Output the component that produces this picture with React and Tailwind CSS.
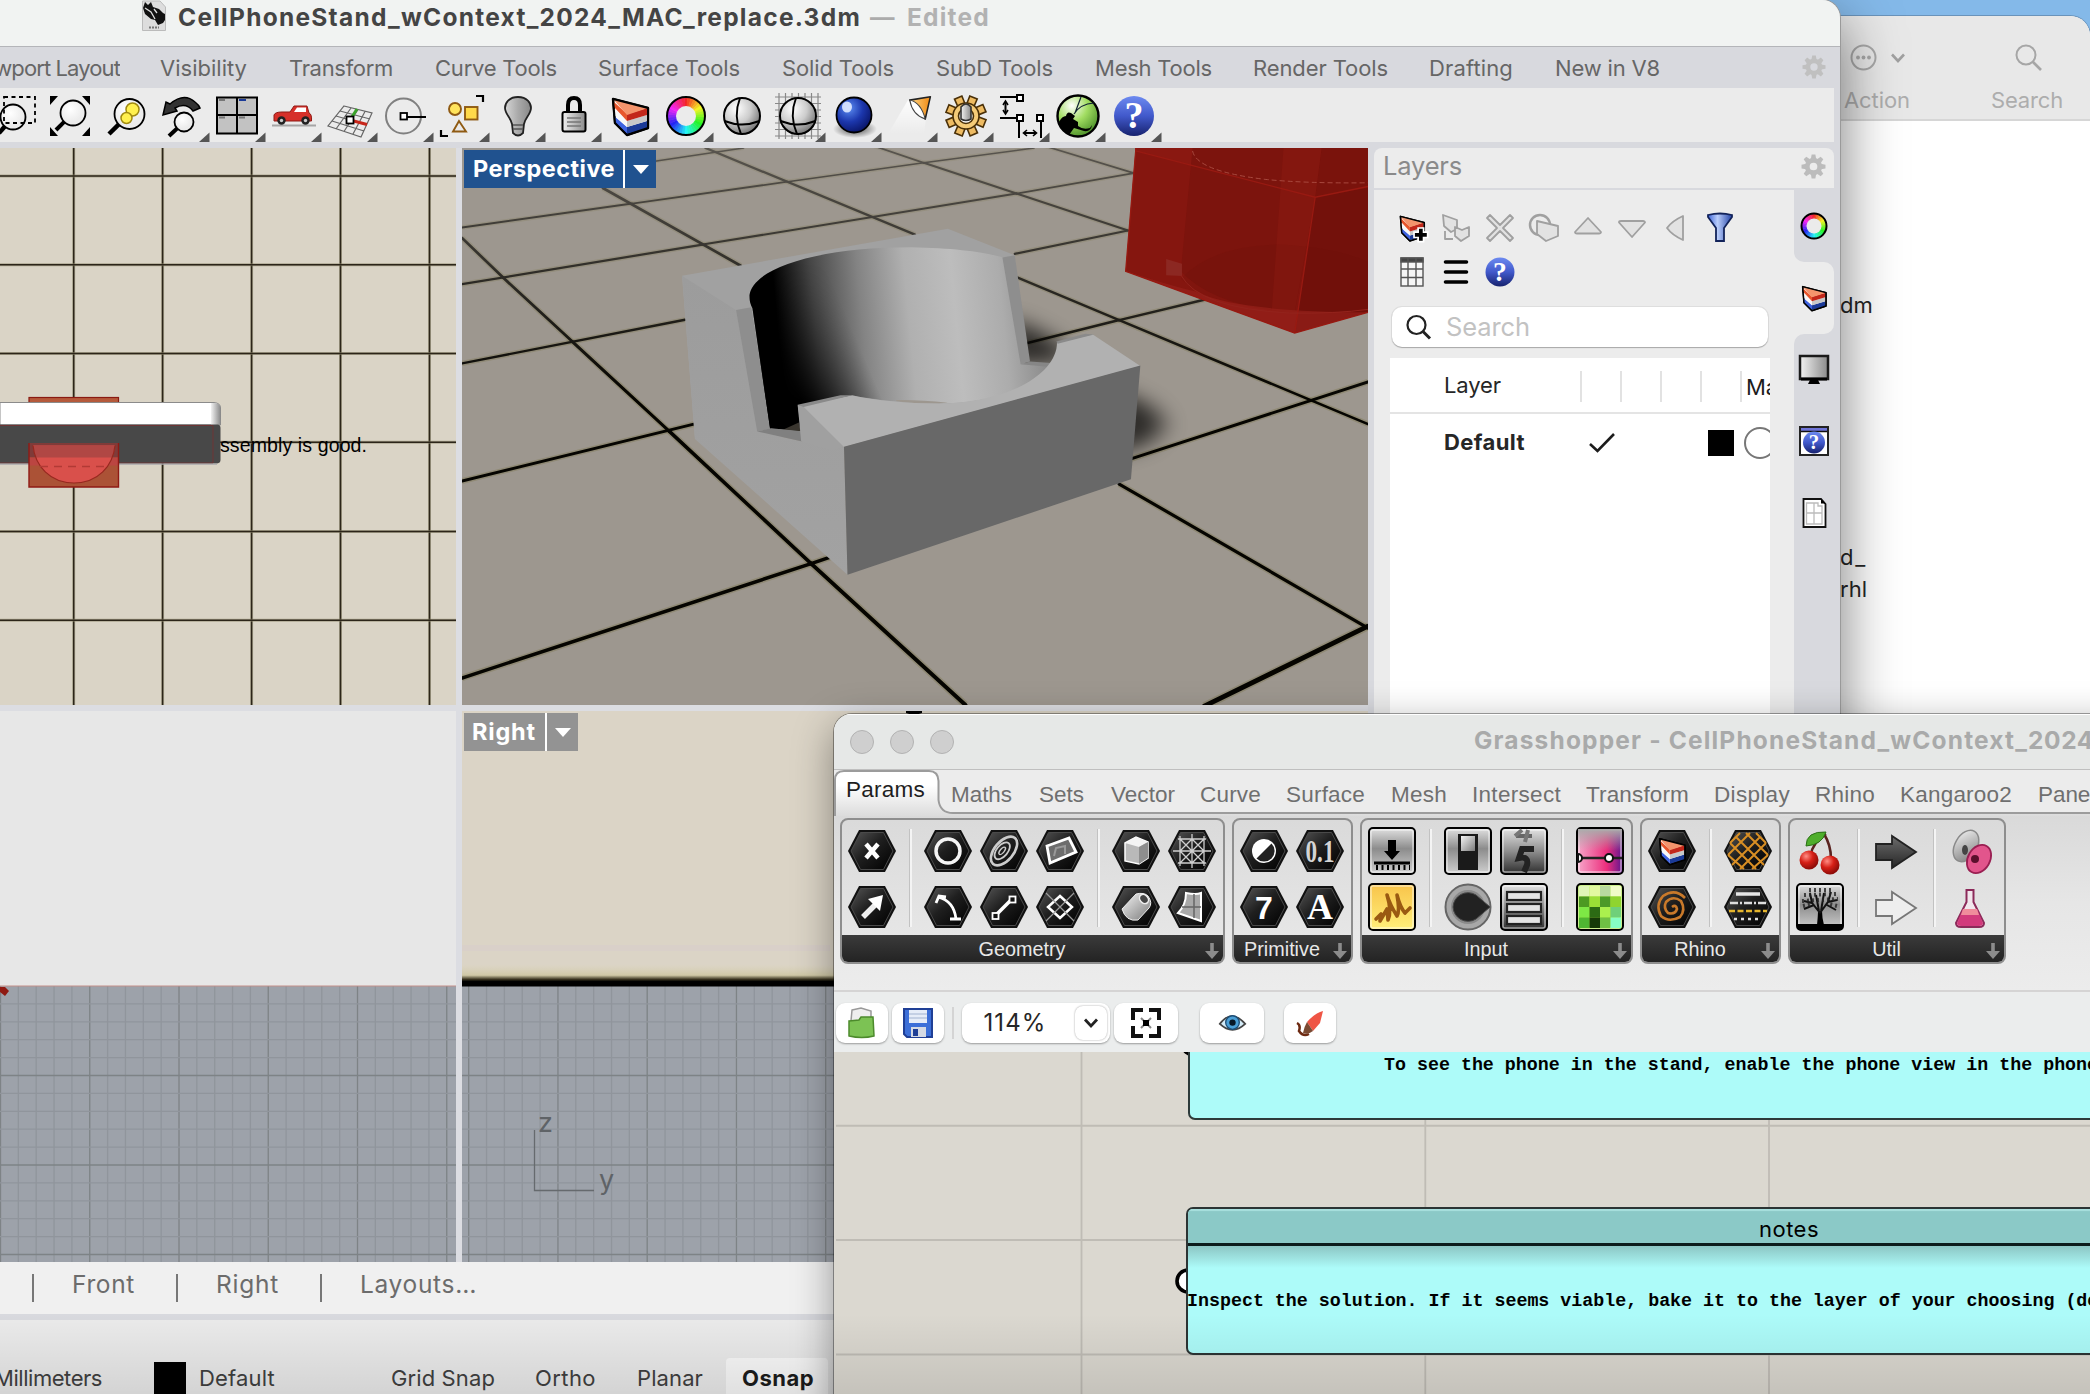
import { useLayoutEffect, useRef } from "react";

/* A one-line label whose tracking is adjusted so that it spans exactly w pixels. */
function Fit({ w, className = "", children }) {
  const ref = useRef(null);
  useLayoutEffect(() => {
    const el = ref.current;
    el.style.letterSpacing = "0px";
    const natural = el.getBoundingClientRect().width;
    const n = el.textContent.length;
    el.style.letterSpacing = `${(w - natural) / Math.max(1, n)}px`;
  }, [w]);
  return (
    <span className={`inline-block shrink-0 whitespace-pre ${className}`} style={{ width: w }}>
      <span ref={ref} className="inline-block">{children}</span>
    </span>
  );
}

/* ---------- shared drawings ---------- */

function Lens({ x, y, r, hx, hy, w = 4, fill = "url(#lens)" }) {
  const d = Math.hypot(hx - x, hy - y);
  const sx = x + ((hx - x) / d) * r;
  const sy = y + ((hy - y) / d) * r;
  return (
    <g>
      <line x1={sx} y1={sy} x2={hx} y2={hy} stroke="#000" strokeWidth={w} />
      <circle cx={x} cy={y} r={r} fill={fill} stroke="#000" strokeWidth="1.8" />
    </g>
  );
}

function Cake() {
  return (
    <g strokeLinejoin="round">
      <path d="M-17 -17 L-15 7 L-3 19 L18 12 L18 -8Z" fill="#fff" stroke="#000" strokeWidth="2.4" />
      <path d="M-3 11 L17 5 V12 L-3 18Z" fill="#1b3a97" />
      <path d="M-16 0 L-3 11 V18 L-15 7Z" fill="#3f63e0" />
      <path d="M-3 5 L17 -1 V5 L-3 11Z" fill="#c8c8c8" />
      <path d="M-16.500 -8 L-3 5 V11 L-16 -1Z" fill="#f8f8f8" />
      <path d="M-3 -2 L17 -8 V-1 L-3 5Z" fill="#c2271a" />
      <path d="M-17 -15 L-3 -2 V5 L-16 -9Z" fill="#e8562c" />
      <path d="M-17 -17 L18 -8 L-3 -1Z" fill="#f4946c" />
      <path d="M-17 -17 L-15 7 L-3 19 L18 12 L18 -8Z" fill="none" stroke="#000" strokeWidth="2" />
    </g>
  );
}

function Wheel({ outer, inner }) {
  const n = 36;
  return (
    <g>
      {Array.from({ length: n }, (_, i) => {
        const a = ((i - 0.6) / n) * Math.PI * 2;
        const b = ((i + 0.6) / n) * Math.PI * 2;
        return (
          <path
            key={i}
            d={`M0 0 L${Math.sin(a) * outer} ${-Math.cos(a) * outer} L${Math.sin(b) * outer} ${-Math.cos(b) * outer}Z`}
            fill={`hsl(${(i / n) * 360} 90% 55%)`}
          />
        );
      })}
      <circle r={inner} fill="#ebebeb" />
      <circle r={outer} fill="none" stroke="#000" strokeWidth="2" />
    </g>
  );
}

function Help({ r = 20 }) {
  return (
    <g>
      <circle r={r} fill="url(#help)" />
      <text y={r * 0.62} textAnchor="middle" fontFamily="Liberation Serif, serif" fontWeight="700" fontSize={r * 1.9} fill="#fff">?</text>
    </g>
  );
}

function Gear({ size, color }) {
  return (
    <svg width={size} height={size} viewBox="-12 -12 24 24" className="shrink-0">
      {[0, 45, 90, 135, 180, 225, 270, 315].map((a) => (
        <path key={a} d="M-2.600 -7 L-1.800 -11.500 H1.800 L2.600 -7Z" fill={color} transform={`rotate(${a})`} />
      ))}
      <circle r="6" fill="none" stroke={color} strokeWidth="4.600" />
    </svg>
  );
}

function Ball() {
  return (
    <g>
      <circle r="18" fill="url(#sphere)" stroke="#000" strokeWidth="2" />
      <path d="M-2 -18 Q-9 0 -1 18 M-17.500 5 Q0 12 17.500 5" fill="none" stroke="#000" strokeWidth="1.900" />
    </g>
  );
}

const tools = [
  { icon: <g><Lens x={-1} y={1} r={12.5} hx={-15} hy={17} w={4.5} /><rect x="-10" y="-19" width="31" height="26" fill="none" stroke="#000" strokeWidth="1.800" strokeDasharray="4 3.500" /></g> },
  { icon: <g><path d="M-20 -20H-12L-20 -11Z M20 -20H12L20 -11Z M-20 20H-12L-20 11Z M20 20H12L20 11Z" /><Lens x={3} y={-3} r={12.5} hx={-14} hy={14} w={4} /></g> },
  { icon: <g><Lens x={3.5} y={-2} r={15} hx={-17} hy={18} w={4.5} /><circle cx="6.500" cy="-6.500" r="6.500" fill="#fff04e" stroke="#a08a10" strokeWidth="1.500" /><circle cx="0.500" cy="2" r="5.500" fill="#fff04e" stroke="#a08a10" strokeWidth="1.500" /></g> },
  { tri: true, icon: <g><Lens x={2} y={6} r={9.5} hx={-13} hy={20} w={4} /><path d="M-19 -1 L-16 -14 L-12 -12 Q2 -24 13 -14 Q17 -11 18 -8 L11 -5 Q4 -14 -7 -8 L-5 -5Z" fill="#333" stroke="#000" strokeWidth="1.500" /></g> },
  { tri: true, icon: <g><rect x="-21" y="-18.500" width="40" height="36" fill="#c2c2c2" stroke="#000" strokeWidth="2" /><path d="M-1 -18V18 M-21 -1H19" stroke="#000" strokeWidth="2" /><path d="M-19 -16h6 M-19 1.500h6 M1 1.500h6" stroke="#777" strokeWidth="2" /><path d="M1 -16h7" stroke="#1b3a97" strokeWidth="2" /></g> },
  { tri: true, icon: <g><path d="M-22 9.500H22" stroke="#a5a5a5" strokeWidth="2" /><path d="M-20 5 V-1 Q-19 -4 -12 -4 H-4 L0 -10 H13 L15 -3 Q18 -2 17.500 5Z" fill="#d6302a" stroke="#8f1a15" strokeWidth="1" /><path d="M0 -4 L3 -8.500 H12 V-4Z" fill="#fff" /><circle cx="-12.500" cy="4.500" r="4.200" fill="#222" /><circle cx="11.500" cy="4.500" r="4.200" fill="#222" /><circle cx="-12.500" cy="4.500" r="1.700" fill="#ccc" /><circle cx="11.500" cy="4.500" r="1.700" fill="#ccc" /></g> },
  { tri: true, icon: <g fill="none"><path d="M-6 -10 L22 -3 L11 21 L-22 10Z M-10 -5 L20 3 M-14 0 L17 9 M-18 5 L14 15 M1 -8 L-14 13 M8 -6.500 L-6 15.500 M15 -4.500 L3 18" stroke="#666" strokeWidth="1.200" /><path d="M0 4 L7 -7" stroke="#3aa32a" strokeWidth="3" /><path d="M0 4 L17 8.500" stroke="#c8271b" strokeWidth="3" /><rect x="-3.500" y="0.500" width="7" height="7" fill="#fff" stroke="#000" strokeWidth="1.800" /></g> },
  { tri: true, icon: <g fill="none"><circle cx="-2.500" r="17.500" stroke="#808080" strokeWidth="2" /><path d="M1 1H20" stroke="#000" strokeWidth="2" /><rect x="-5.500" y="-3" width="6.500" height="6.500" fill="#fff" stroke="#000" strokeWidth="1.800" /></g> },
  { tri: true, icon: <g><circle cx="-7" cy="-7" r="6" fill="#ffe45c" stroke="#8f5a12" strokeWidth="1.900" /><rect x="3" y="-9" width="12.500" height="12.500" fill="#ffd94a" stroke="#8f5a12" strokeWidth="1.900" /><path d="M-3 5 L-9 15.500 H4Z" fill="none" stroke="#8f5a12" strokeWidth="1.900" /><path d="M14 -20H21V-14 M-21 14V20H-14" fill="none" stroke="#000" strokeWidth="2.200" /></g> },
  { tri: true, icon: <g><path d="M0 -19 C9 -19 13 -13 13 -8 C13 -2 7 2 6 8 L5 17 Q0 22 -5 17 L-6 8 C-7 2 -13 -2 -13 -8 C-13 -13 -9 -19 0 -19Z" fill="url(#bulb)" stroke="#222" strokeWidth="1.800" /><path d="M-5 9H5 M-5 13H5" stroke="#555" strokeWidth="1.500" /></g> },
  { tri: true, icon: <g><path d="M-6 -3V-11Q-6 -18 0 -18Q6 -18 6 -11V-3" fill="none" stroke="#000" strokeWidth="4" /><rect x="-11.500" y="-4" width="23" height="19.500" rx="2" fill="url(#metal)" stroke="#000" strokeWidth="2" /><path d="M-7 2H7 M-7 6H7 M-7 10H7" stroke="#777" strokeWidth="1.600" /></g> },
  { tri: true, icon: <Cake /> },
  { tri: true, icon: <Wheel outer={19} inner={10} /> },
  { icon: <Ball /> },
  { tri: true, icon: <g><path d="M-19 -23V23 M-12.500 -23V23 M-6 -23V23 M0.500 -23V23 M7 -23V23 M13.500 -23V23 M20 -23V23 M-23 -19H23 M-23 -12.500H23 M-23 -6H23 M-23 0.500H23 M-23 7H23 M-23 13.500H23 M-23 20H23" stroke="#888" strokeWidth="1.200" /><Ball /></g> },
  { tri: true, icon: <g><ellipse cx="1" cy="13" rx="22" ry="9" fill="url(#drop)" /><circle cy="-1" r="17.500" fill="url(#blue)" stroke="#000" strokeWidth="1.800" /><ellipse cx="-7" cy="-9" rx="5" ry="5.500" fill="#dfe9ff" opacity=".9" /></g> },
  { tri: true, icon: <g><path d="M-2 -16 L-22 18 H14 L16 2Z" fill="url(#beam)" /><g transform="translate(7.500 -9) scale(.86) translate(-6 9)"><path d="M-3 -17 L21 -21 L15 5Z" fill="url(#orange)" stroke="#222" strokeWidth="1.800" strokeLinejoin="round" /><path d="M-3 -17 Q10 -14 15 5 Q0 0 -3 -17Z" fill="#fff" stroke="#444" strokeWidth="1.200" /></g></g> },
  { tri: true, icon: <g stroke="#4a3008" strokeWidth="1.600">{[0, 45, 90, 135, 180, 225, 270, 315].map((a) => (<path key={a} d="M-3.800 -10 L-4 -20 H4 L3.800 -10Z" fill="#eebb62" transform={`rotate(${a + 22})`} />))}<circle r="13" fill="#f5cb78" /><circle r="7.500" fill="#fff" /><path d="M-5 3 V-9 Q0 -15 5 -9 V3 Q0 6 -5 3Z" fill="url(#metal)" stroke="#333" /></g> },
  { tri: true, icon: <g fill="none" stroke="#000" strokeWidth="2"><path d="M-22 -19H-5 M-22 2H-5 M-16.500 -14V-3 M-3 6V22 M19 6V22 M2 17H14" /><path d="M-19 -11L-16.500 -15L-14 -11 M-19 -6L-16.500 -2L-14 -6 M5 14L1.500 17L5 20 M11 14L14.500 17L11 20" strokeWidth="1.600" /><rect x="-5" y="-21" width="6" height="6" fill="#fff" /><rect x="-5" y="-1" width="6" height="6" fill="#fff" /><rect x="15" y="-1" width="6" height="6" fill="#fff" /></g> },
  { tri: true, icon: <g><circle r="20.500" fill="url(#green)" stroke="#000" strokeWidth="2.400" /><path d="M-19 6 Q-16 0 -12 0 Q-11 -5 -7 -3 L-3 0 L-5 3 L0 6 V10 Q5 14 12 12 L14 9 Q13 16 6 15 L-4 12 L-9 19 Q-17 15 -19 6Z" /><path d="M-4 -2 Q2 -12 16 -13 M-3 -3 L3 -19" stroke="#123" strokeWidth="1.200" fill="none" /></g> },
  { tri: true, icon: <Help r={20} /> },
];

const menu = [
  ["Visibility", 87, 42], ["Transform", 104, 42], ["Curve Tools", 122, 41], ["Surface Tools", 142, 42], ["Solid Tools", 112, 42],
  ["SubD Tools", 117, 42], ["Mesh Tools", 117, 41], ["Render Tools", 135, 41], ["Drafting", 84, 42], ["New in V8", 105, 42],
];

function Defs() {
  return (
    <svg className="absolute h-0 w-0">
      <defs>
        <radialGradient id="lens" cx=".4" cy=".35"><stop offset="0" stopColor="#fff" /><stop offset="1" stopColor="#ececec" /></radialGradient>
        <radialGradient id="sphere" cx=".35" cy=".3" r=".8"><stop offset="0" stopColor="#fff" /><stop offset=".5" stopColor="#ccc" /><stop offset="1" stopColor="#666" /></radialGradient>
        <radialGradient id="blue" cx=".35" cy=".3" r=".8"><stop offset="0" stopColor="#5c8df2" /><stop offset=".5" stopColor="#1c37ad" /><stop offset="1" stopColor="#060f5c" /></radialGradient>
        <radialGradient id="green" cx=".35" cy=".25" r=".85"><stop offset="0" stopColor="#fff" /><stop offset=".45" stopColor="#a2dd62" /><stop offset="1" stopColor="#3f8420" /></radialGradient>
        <radialGradient id="drop"><stop offset="0" stopColor="#000" stopOpacity=".7" /><stop offset="1" stopColor="#000" stopOpacity="0" /></radialGradient>
        <linearGradient id="help" x2="0" y2="1"><stop offset="0" stopColor="#6d8af0" /><stop offset=".5" stopColor="#4159cb" /><stop offset="1" stopColor="#17226e" /></linearGradient>
        <linearGradient id="bulb"><stop offset="0" stopColor="#d6d6d6" /><stop offset=".5" stopColor="#aaa" /><stop offset="1" stopColor="#888" /></linearGradient>
        <linearGradient id="metal"><stop offset="0" stopColor="#f2f2f2" /><stop offset="1" stopColor="#8a8a8a" /></linearGradient>
        <linearGradient id="orange"><stop offset="0" stopColor="#ffd98a" /><stop offset="1" stopColor="#f08a14" /></linearGradient>
        <linearGradient id="beam" x2="0" y2="1"><stop offset="0" stopColor="#fff" stopOpacity=".9" /><stop offset="1" stopColor="#fff" stopOpacity="0" /></linearGradient>
        <linearGradient id="hex" x2="1" y2="1"><stop offset="0" stopColor="#555" /><stop offset=".45" stopColor="#1f1f1f" /><stop offset="1" stopColor="#000" /></linearGradient>
        <linearGradient id="steel" x2="0" y2="1"><stop offset="0" stopColor="#e2e2e2" /><stop offset=".45" stopColor="#8c8c8c" /><stop offset="1" stopColor="#d0d0d0" /></linearGradient>
        <linearGradient id="steelDark" x2="0" y2="1"><stop offset="0" stopColor="#e6e6e6" /><stop offset=".5" stopColor="#8f8f8f" /><stop offset="1" stopColor="#2c2c2c" /></linearGradient>
        <linearGradient id="amber" x2="0" y2="1"><stop offset="0" stopColor="#f8c34a" /><stop offset="1" stopColor="#fff07a" /></linearGradient>
        <linearGradient id="pink"><stop offset="0" stopColor="#f7a9cb" /><stop offset=".65" stopColor="#ec2d7c" /><stop offset="1" stopColor="#5b1590" /></linearGradient>
        <linearGradient id="greyFade" x2="0" y2="1"><stop offset="0" stopColor="#aaa" /><stop offset="1" stopColor="#aaa" stopOpacity="0" /></linearGradient>
        <linearGradient id="funnel"><stop offset="0" stopColor="#3f66d8" /><stop offset=".4" stopColor="#b9cdfb" /><stop offset="1" stopColor="#2444a8" /></linearGradient>
        <radialGradient id="cherry" cx=".35" cy=".3" r=".7"><stop offset="0" stopColor="#ff8d84" /><stop offset=".5" stopColor="#d61f16" /><stop offset="1" stopColor="#8d0c08" /></radialGradient>
        <linearGradient id="lightMetal" x2="1" y2="1"><stop offset="0" stopColor="#f4f4f4" /><stop offset="1" stopColor="#7a7a7a" /></linearGradient>
        <linearGradient id="darkArrow" x2="0" y2="1"><stop offset="0" stopColor="#6c6c6c" /><stop offset="1" stopColor="#262626" /></linearGradient>
        <linearGradient id="tab" x2="0" y2="1"><stop offset=".3" stopColor="#fff" /><stop offset="1" stopColor="#d9d9d9" /></linearGradient>
      </defs>
    </svg>
  );
}

/* ---------- viewports ---------- */

function TopView() {
  return (
    <svg width="456" height="557" viewBox="0 148 456 557" className="block">
      <rect y="148" width="456" height="557" fill="#dad4c6" />
      {[73.7, 162.6, 251.6, 340.5, 429.5].map((x) => (
        <g key={x}><path d={`M${x} 148V705`} stroke="#8f8a6e" strokeWidth="3" opacity=".6" /><path d={`M${x} 148V705`} stroke="#2c2519" strokeWidth="1.500" /></g>
      ))}
      {[175.9, 264.7, 353.5, 442.3, 531.4, 620.2].map((y) => (
        <g key={y}><path d={`M0 ${y}H456`} stroke="#8f8a6e" strokeWidth="3" opacity=".6" /><path d={`M0 ${y}H456`} stroke="#2c2519" strokeWidth="1.500" /></g>
      ))}
      <rect x="29" y="397.500" width="89.500" height="10" fill="#b55a3b" stroke="#8a1a12" strokeWidth="1.200" />
      <path d="M0 402.500H214Q220.500 403 220.500 408V425H0Z" fill="#fff" stroke="#8b8b8b" />
      <path d="M211 403H214Q220.500 403 220.500 408V425H211Z" fill="url(#metal)" />
      <path d="M0 424.500H218Q220.500 425 220.500 428V460Q220.500 463 217 463.500H0Z" fill="#484848" />
      <path d="M0 425.500H213V463H0" fill="none" stroke="#6e3434" strokeWidth="1" />
      <path d="M0 464.200H217" stroke="#a9a9ad" strokeWidth="1.300" />
      <rect x="29" y="443" width="89.500" height="44" fill="#ab5236" />
      <rect x="29" y="443" width="89.500" height="14.500" fill="#7f3b39" />
      <rect x="29" y="457.500" width="89.500" height="8" fill="#bb4541" />
      <path d="M33 445.500H115C113 466 98 483 74 483S35 466 33 445.500Z" fill="#d9504b" />
      <path d="M33 445.500H115L112.500 457.500H35.500Z" fill="#b04744" />
      <path d="M33 445.500C35 466 50 483 74 483S113 466 115 445.500" fill="none" stroke="#96281f" strokeWidth="1.200" />
      <path d="M40 466.500H110" stroke="#b23a35" strokeWidth="1.300" strokeDasharray="8 6" />
      <path d="M29 443V487H118.500V443" fill="none" stroke="#8f1a14" strokeWidth="1.400" />
      <text x="220" y="452" fontFamily="Liberation Sans, Arial, sans-serif" fontSize="19.500" textLength="147">ssembly is good.</text>
    </svg>
  );
}

const floor = [
  [10, 265, 80, 372, 3.4], [80, 372, 198, 545, 3.6], [198, 545, 363, 787, 3.9], [363, 787, 605, 1145, 4.4], [605, 1145, 868, 1527, 5],
  [250, 130, 485, 340, 3.4], [1130, 930, 1554, 1319, 4],
  [425, 22, 782, 256, 2.9], [957, 372, 1130, 487, 3], [1130, 487, 1554, 768, 3.3],
  [700, 10, 797, 62, 2.2], [797, 62, 955, 145, 2.5], [955, 145, 1145, 245, 2.7], [1000, 15, 1155, 90, 2.1],
  [10, 237, 300, 172, 2.4], [300, 172, 565, 113, 2.2], [565, 113, 797, 62, 2], [797, 62, 985, 22, 1.9], [330, 60, 490, 22, 1.9],
  [10, 390, 420, 283, 2.8], [420, 283, 955, 145, 2.6], [955, 145, 1155, 90, 2.2],
  [10, 604, 390, 486, 3], [952, 308, 1145, 245, 2.7],
  [10, 922, 405, 768, 3.6], [960, 554, 1130, 487, 3.2], [1130, 487, 1280, 430, 3],
  [10, 1454, 605, 1145, 4.4], [605, 1145, 640, 1126, 4.4], [1150, 862, 1554, 654, 3.8],
  [1275, 1530, 1554, 1314, 6],
];

function PerspectiveView() {
  return (
    <svg width="906" height="557" viewBox="10 22 1544 1505" preserveAspectRatio="none" className="block">
      <defs>
        <linearGradient id="bore" gradientUnits="userSpaceOnUse" x1="510" y1="470" x2="1010" y2="440">
          <stop offset="0" stopColor="#000" /><stop offset=".07" stopColor="#000" /><stop offset=".2" stopColor="#454545" /><stop offset=".36" stopColor="#838383" />
          <stop offset=".52" stopColor="#b0b0b0" /><stop offset=".68" stopColor="#bdbdbd" /><stop offset=".84" stopColor="#acacac" /><stop offset="1" stopColor="#858585" />
        </linearGradient>
        <linearGradient id="boreDark" gradientUnits="userSpaceOnUse" x1="570" y1="640" x2="700" y2="605">
          <stop offset="0" stopColor="#000" /><stop offset="1" stopColor="#000" stopOpacity="0" />
        </linearGradient>
        <linearGradient id="boreMask" x2="0" y2="1"><stop offset=".1" stopColor="#000" /><stop offset=".8" stopColor="#fff" /></linearGradient>
        <mask id="lower" maskUnits="userSpaceOnUse" x="480" y="280" width="560" height="540"><rect x="480" y="280" width="560" height="540" fill="url(#boreMask)" /></mask>
        <linearGradient id="haze" gradientUnits="userSpaceOnUse" x1="0" y1="22" x2="0" y2="700"><stop offset="0" stopColor="#9d978f" stopOpacity=".55" /><stop offset="1" stopColor="#9d978f" stopOpacity="0" /></linearGradient>
        <linearGradient id="side" x2="0" y2="1"><stop offset="0" stopColor="#9c9c9c" /><stop offset="1" stopColor="#a2a2a2" /></linearGradient>
        <filter id="soft" x="-60%" y="-60%" width="220%" height="220%"><feGaussianBlur stdDeviation="20 28" /></filter>
      </defs>
      <rect x="10" y="22" width="1544" height="1505" fill="#9d978f" />
      {floor.map(([a, b, c, d, w], i) => (
        <path key={i} d={`M${a} ${b}L${c} ${d}`} stroke="#807a55" strokeWidth={w + 2.2} opacity=".45" vectorEffect="non-scaling-stroke" />
      ))}
      {floor.map(([a, b, c, d, w], i) => (
        <path key={i} d={`M${a} ${b}L${c} ${d}`} stroke="#050400" strokeWidth={w * 0.8} strokeLinecap="round" vectorEffect="non-scaling-stroke" />
      ))}
      <rect x="10" y="22" width="1544" height="700" fill="url(#haze)" />
      <path d="M1120 670 L1185 720 L1210 770 L1180 820 L1120 850Z" fill="#000" opacity=".72" filter="url(#soft)" />
      <path d="M940 480 L985 510 L1025 545 L1050 600 L940 610Z" fill="#000" opacity=".72" filter="url(#soft)" />
      {/* solid */}
      <path d="M385 367 L838 240 L952 312 L965 600 L900 700 L600 800 L407 808Z" fill="#a1a1a1" />
      <path d="M385 367 L477 460 L513 788 L590 815 L582 716 L661 828 L667 1175 L407 808Z" fill="url(#side)" />
      <path d="M477 460 L503 452 L537 780 L513 788Z" fill="#8e8e8e" />
      <path d="M500 420 C505 350 610 290 775 290 C850 292 900 303 932 318 L962 603 L1014 603 C995 660 930 705 840 712 C780 712 720 705 675 692 L655 692 L582 718 L588 786 L535 780 L505 455 C500 440 500 430 500 420Z" fill="url(#bore)" />
      <path d="M500 420 C505 350 610 290 775 290 L775 712 L675 692 L582 718 L588 786 L535 780 L505 455Z" fill="url(#boreDark)" mask="url(#lower)" />
      <path d="M556 784 L584 764 L588 787Z" fill="#3a362f" />
      <path d="M513 788 L537 779 L588 787 L590 815Z" fill="#808080" />
      <path d="M931 318 L952 312 L978 599 L962 606Z" fill="#8e8e8e" />
      <path d="M962 606 L978 599 L1014 603 L1009 613Z" fill="#868686" />
      <path d="M750 703 Q790 702 838 710 Q800 716 750 706Z" fill="#9d978f" />
      <path d="M582 716 L596 722 L661 829 L640 840 L588 815Z" fill="#a0a0a0" />
      <path d="M590 718 L675 690 C720 706 780 714 840 712 C960 700 1024 620 1024 548 L1085 526 L1166 611 L661 830Z" fill="#b1b1b1" />
      <path d="M582 716 L655 690 L675 690 L592 722Z" fill="#8a8a8a" />
      <path d="M1023 545 L1072 524 L1087 526 L1025 551Z" fill="#8a8a8a" />
      <path d="M661 829 L1166 610 L1150 917 L667 1175Z" fill="#686868" />
      {/* red block */}
      <path d="M1158 22 H1554 V466 L1429 522 L1141 355Z" fill="#8a1811" />
      <path d="M1158 30 L1464 155 L1429 522 L1141 355Z" fill="#85160f" />
      <path d="M1255 22 H1475 L1464 155 L1429 468 Q1290 450 1235 355Z" fill="#7c140d" />
      <path d="M1475 22 H1554 V466 L1429 522 L1464 155Z" fill="#73110b" />
      <path d="M1475 22 H1554 V130 L1464 155Z" fill="#7a130c" />
      <path d="M1410 22 L1390 460 L1429 468 L1464 155 L1475 22Z" fill="#84170f" />
      <path d="M1235 375 Q1290 285 1400 283 Q1500 290 1554 330 V466 Q1300 480 1235 375Z" fill="#5f0d08" opacity=".12" />
      <path d="M1141 355 Q1220 395 1260 410 Q1330 465 1554 466 L1429 522Z" fill="#99231c" opacity=".6" />
      <path d="M1210 322 L1237 335 V368 L1210 366Z" fill="#8c2822" />
      <path d="M1158 30 L1464 155 L1554 126 M1464 155 L1429 522 M1158 22 L1158 32 L1141 355 L1429 522 L1554 466" fill="none" stroke="#981a12" strokeWidth="1.300" vectorEffect="non-scaling-stroke" />
      <path d="M1255 30 Q1262 85 1380 107 Q1450 118 1554 116" fill="none" stroke="#a8483e" strokeWidth="1" strokeDasharray="5 3" vectorEffect="non-scaling-stroke" />
      <path d="M1235 365 Q1265 455 1420 468 Q1500 470 1554 458" fill="none" stroke="#93231c" strokeWidth="1" vectorEffect="non-scaling-stroke" />
    </svg>
  );
}

function CPlane({ x0, width, children }) {
  const left = x0;
  const vs = [];
  for (let i = 0, x = x0 === 0 ? 0.5 : 468.7; x < left + width; i++, x += 17.85) vs.push([x, i % 5 === 0]);
  const hs = [];
  for (let i = 1, y = 986; y < 1250; i++) { y += 17.9; hs.push([y, i % 5 === 0]); }
  return (
    <svg width={width} height="551" viewBox={`${left} 711 ${width} 551`} className="block">
      <rect x={left} y="986" width={width} height="276" fill="#9da2aa" />
      {vs.map(([x, m]) => <path key={x} d={`M${x} 986V1262`} stroke={m ? "#7e8386" : "#90959c"} strokeWidth="1.300" />)}
      {hs.map(([y, m]) => <path key={y} d={`M${left} ${y}H${left + width}`} stroke={m ? "#7e8386" : "#90959c"} strokeWidth="1.300" />)}
      {children}
    </svg>
  );
}

function ViewLabel({ text, w, box, active }) {
  return (
    <div className="absolute left-[2px] top-[2px] flex h-[38px] text-[23.500px] font-bold leading-[38px] text-white">
      <div className={active ? "bg-[#20528f] pl-[9px]" : "bg-[#939393] pl-[8px]"} style={{ width: box }}>
        <Fit w={w}>{text}</Fit>
      </div>
      <div className="w-[2px] bg-white" />
      <div className={`flex w-[31px] items-center justify-center ${active ? "bg-[#20528f]" : "bg-[#939393]"}`}>
        <svg width="16" height="9"><path d="M0 0H16L8 9Z" fill="#fff" /></svg>
      </div>
    </div>
  );
}

/* ---------- layers panel ---------- */

const ghost = { fill: "#e2e2e2", stroke: "#a0a0a0", strokeWidth: 1.8, strokeLinejoin: "round" };
const layerTools = [
  <g transform="scale(.68)"><Cake /><path d="M3 6h6v-6h8v6h6v8h-6v6h-8v-6h-6z" fill="#000" stroke="#fff" strokeWidth="2.500" /></g>,
  <g {...ghost}><path d="M-13 -13L1 -8V1L-5 4L-12 -2Z" /><path d="M-1 -1L6 2L13 -1V8L5 13L-1 8Z" /><path d="M-11 3V11H-3" fill="none" /></g>,
  <path {...ghost} d="M-13 -10L-10 -13L0 -3L10 -13L13 -10L3 0L13 10L10 13L0 3L-10 13L-13 10L-3 0Z" />,
  <g {...ghost}><circle cx="-4" cy="-3" r="10" fill="none" strokeWidth="2.500" /><path d="M-7 -7L14 -2V8L2 13L-7 6Z" /></g>,
  <path {...ghost} d="M-13 4L0 -10L13 4Q13 5.500 11 5.500H-11Q-13 5.500 -13 4Z" />,
  <path {...ghost} d="M-13 -5.500L0 9L13 -5.500Q13 -7 11 -7H-11Q-13 -7 -13 -5.500Z" />,
  <path {...ghost} d="M7 -12V12Q-4 7 -9 0Q-4 -7 7 -12Z" />,
  <path d="M-12 -13Q0 -16 12 -13V-11L4 0V13H-4V0L-12 -11Z" fill="url(#funnel)" stroke="#12235a" strokeWidth="1.800" />,
  <g fill="none" stroke="#555" strokeWidth="1.400"><rect x="-11" y="-14" width="22" height="28" fill="#f6f6f6" /><rect x="-11" y="-14" width="22" height="4" fill="#444" /><path d="M-11 -3H11 M-11 5.500H11 M-4 -14V14 M4 -14V14" /></g>,
  <path d="M-10.500 -10H10.500 M-10.500 0H10.500 M-10.500 10H10.500" stroke="#000" strokeWidth="3.600" strokeLinecap="round" />,
  <Help r={14.5} />,
];

function LayersPanel() {
  return (
    <div className="flex w-[460px] flex-col overflow-hidden rounded-t-[8px] bg-[#ececec]">
      <div className="flex h-[42px] items-center justify-between border-b-2 border-[#d8d9de] pb-[4px] pl-[9px] pr-[8px] text-[25.500px] text-[#8a8a8a]">
        <Fit w={79} className="leading-[36px]">Layers</Fit>
        <Gear size={25} color="#bcbcbc" />
      </div>
      <div className="flex flex-1">
        <div className="w-[420px] pl-[16px]">
          <div className="flex w-[360px] flex-wrap pt-[16px]">
            {layerTools.map((icon, i) => (
              <svg key={i} width="44" height="44" viewBox="-22 -22 44 44">{icon}</svg>
            ))}
          </div>
          <div className="ml-[2px] mt-[13px] flex h-[40px] w-[376px] items-center rounded-[10px] bg-white pl-[14px] shadow-[0_1px_1px_#a8a8a8,0_0_0_1px_#dedede]">
            <svg width="26" height="26" viewBox="0 0 26 26" fill="none" stroke="#222" strokeWidth="2.200"><circle cx="10.500" cy="11" r="9" /><path d="M17 17.500L24 24.500" strokeWidth="3" /></svg>
            <Fit w={84} className="ml-[14px] text-[25.500px] text-[#c2c2c2]">Search</Fit>
          </div>
          <div className="mt-[11px] h-[400px] w-[380px] overflow-hidden bg-white text-[22px] text-[#262626]">
            <div className="flex h-[56px] items-center border-b-2 border-[#e4e4e4] pl-[54px] pt-[2px]">
              <Fit w={57} className="mr-[79px] pb-[1px]">Layer</Fit>
              {[0, 1, 2, 3, 4].map((i) => <div key={i} className="h-[31px] w-[40px] shrink-0 border-l-2 border-[#e2e2e2] pl-[4px]">{i === 4 && <span className="leading-[29px] text-[#1c1c1c]">Material</span>}</div>)}
            </div>
            <div className="flex h-[57px] items-center pl-[54px]">
              <Fit w={81} className="mb-[1px] font-bold">Default</Fit>
              <svg width="28" height="22" viewBox="0 0 28 22" className="ml-[63px] shrink-0"><path d="M2 12L9.500 19L26 2" fill="none" stroke="#1c1c1c" strokeWidth="2.600" /></svg>
              <div className="ml-[92px] h-[26px] w-[26px] shrink-0 bg-black" />
              <div className="ml-[10px] h-[32px] w-[32px] shrink-0 rounded-full border-2 border-[#777]" />
            </div>
          </div>
        </div>
        <div className="flex w-[40px] flex-col bg-[#ececec]">
          <div className="flex h-[72px] items-center justify-center rounded-bl-[10px] bg-[#d8d9de]">
            <svg width="32" height="32" viewBox="-16 -16 32 32"><Wheel outer={12.500} inner={7.500} /></svg>
          </div>
          <div className="h-[72px] bg-[#d8d9de]">
            <div className="flex h-[72px] items-center justify-center rounded-r-[10px] bg-[#ececec]">
              <svg width="36" height="36" viewBox="-27 -27 54 54"><Cake /></svg>
            </div>
          </div>
          <div className="flex flex-1 flex-col items-center gap-[40px] rounded-tl-[10px] bg-[#d8d9de] pt-[19px]">
            <svg width="32" height="32" viewBox="-16 -16 32 32"><rect x="-14" y="-13" width="28" height="23" fill="url(#metal)" stroke="#1a1a1a" strokeWidth="2.500" /><path d="M-13 10H13" stroke="#000" strokeWidth="3" /><path d="M-6 15H6L4 11H-4Z" /></svg>
            <svg width="32" height="32" viewBox="-16 -16 32 32"><rect x="-14" y="-14" width="28" height="28" fill="#fff" stroke="#222" strokeWidth="2" /><rect x="-13" y="-13" width="26" height="3" fill="#6f74d8" /><path d="M-13 -9.500H13" stroke="#111" strokeWidth="1.500" /><g transform="translate(0 1.500)"><Help r={11} /></g></svg>
            <svg width="32" height="32" viewBox="-16 -16 32 32"><path d="M-10.500 -14H7L11.500 -9V14H-10.500Z" fill="#fff" stroke="#111" strokeWidth="1.800" /><path d="M7 -14V-9.500H11.500Z" /><path d="M-7.500 -10H4 V-7H8V11H-7.500Z M0 -10V11 M-7.500 0H8" fill="none" stroke="#bcbcbc" strokeWidth="1.300" /></svg>
          </div>
        </div>
      </div>
    </div>
  );
}

/* ---------- modelling window ---------- */

function RhinoWindow() {
  return (
    <div className="absolute left-0 top-0 flex h-[1394px] w-[1840px] flex-col rounded-tr-[18px] bg-[#d8d9de] shadow-[0_0_0_1px_#9a9a9a,0_20px_60px_rgba(0,0,0,.55)]">
      <div className="flex h-[47px] shrink-0 items-start overflow-hidden rounded-tr-[18px] border-b border-[#b4b5b9] bg-[#f1f3f2] pl-[142px] text-[24.500px] font-bold leading-[34px]">
        <svg width="24" height="31" viewBox="0 0 24 31"><path d="M.500 1H18L23.500 7V30.500H.500Z" fill="#ddd" stroke="#bbb" /><path d="M3 2L6 5L9 2L11 7L17 9L21 13L23 14V20L21 23L16 25L13 20L9 19L3 14L1 8Z" fill="#111" /><path d="M3 8L9 12L13 19M12 9L15 13" stroke="#ddd" strokeWidth="1.300" fill="none" /><path d="M7 27.500H17" stroke="#777" strokeWidth="2" strokeDasharray="2 1" /></svg>
        <Fit w={683} className="ml-[12px] text-[#444]">CellPhoneStand_wContext_2024_MAC_replace.3dm</Fit>
        <Fit w={24} className="ml-[9px] text-[#ababab]">—</Fit>
        <Fit w={83} className="ml-[13px] text-[#b2b2b2]">Edited</Fit>
      </div>
      <div className="flex h-[41px] shrink-0 items-center pt-[1px] text-[22px] text-[#666]">
        <div className="flex w-[120px] justify-end overflow-hidden"><Fit w={156}>Viewport Layout</Fit></div>
        <div className="flex flex-1 pl-[40px]">
          {menu.map(([t, w, g], i) => <div key={t} className="flex"><Fit w={w}>{t}</Fit>{i < menu.length - 1 && <div style={{ width: g }} />}</div>)}
        </div>
        <div className="pb-[3px] pr-[14px]"><Gear size={24} color="#c0c0c0" /></div>
      </div>
      <div className="mr-[6px] h-[54px] shrink-0 overflow-hidden bg-[#ebebeb]">
        <div className="-ml-[14px] flex">
          {tools.map((t, i) => (
            <div key={i} className="relative h-[54px] w-[56px] shrink-0">
              <svg width="56" height="54" viewBox="-28 -28 56 54" className="block">
                {t.icon}
                {t.tri && <path d="M27.500 16.500V26H17Z" fill="#555" />}
              </svg>
            </div>
          ))}
        </div>
      </div>
      <div className="flex h-[1120px] shrink-0 pr-[6px] pt-[6px]">
        <div className="grid h-[1114px] w-[1368px] grid-cols-[456px_906px] grid-rows-[557px_551px] gap-[6px] bg-[#dcdde2]">
          <TopView />
          <div className="relative"><PerspectiveView /><ViewLabel text="Perspective" w={142} box={159} active /></div>
          <div className="bg-[#e7e7e7]">
            <CPlane x0={0} width={456}>
              <path d="M0 986H456" stroke="#c48f8a" strokeWidth="1.200" />
              <path d="M0 987H5L9 991L5 996L0 992Z" fill="#8f1a12" />
            </CPlane>
          </div>
          <div className="relative bg-[#dbd4c6]">
            <CPlane x0={462} width={906}>
              <defs><linearGradient id="ground" x2="0" y2="1"><stop offset="0" stopColor="#dad3b8" stopOpacity="0" /><stop offset=".5" stopColor="#cfc8a6" /><stop offset=".68" stopColor="#3a3420" /><stop offset=".78" stopColor="#000" /></linearGradient></defs>
              <path d="M462 948H830" stroke="#d9d0c9" strokeWidth="6" />
              <rect x="462" y="964" width="906" height="22.500" fill="url(#ground)" />
              <path d="M906 711H922V713Q914 716 906 713Z" />
              <path d="M534.500 1130V1190.500H594" fill="none" stroke="#666a6e" strokeWidth="1.300" />
              <text x="538" y="1131.500" fontFamily="Inter, sans-serif" fontSize="27" fill="#5f6367">z</text>
              <text x="599" y="1189" fontFamily="Inter, sans-serif" fontSize="27" fill="#5f6367">y</text>
            </CPlane>
            <ViewLabel text="Right" w={64} box={81} />
          </div>
        </div>
        <div className="ml-[6px] flex"><LayersPanel /></div>
      </div>
      <div className="flex h-[52px] shrink-0 items-start bg-[#f0f0f0] text-[24.500px] leading-[44px] text-[#6c6c6c]">
        <div className="ml-[32px] mt-[12px] h-[28px] w-[2px] bg-[#777]" />
        <Fit w={63} className="ml-[38px]">Front</Fit>
        <div className="ml-[41px] mt-[12px] h-[28px] w-[2px] bg-[#777]" />
        <Fit w={63} className="ml-[38px]">Right</Fit>
        <div className="ml-[41px] mt-[12px] h-[28px] w-[2px] bg-[#777]" />
        <Fit w={117} className="ml-[38px]">Layouts…</Fit>
      </div>
      <div className="flex flex-1 items-start border-t-[6px] border-[#d8d9de] bg-[#ebebeb] pt-[38px] text-[22px] leading-[40px] text-[#404040]">
        <Fit w={108} className="-ml-[6px]">Millimeters</Fit>
        <div className="ml-[52px] mt-[4px] h-[40px] w-[32px] shrink-0 bg-black" />
        <Fit w={76} className="ml-[13px]">Default</Fit>
        <Fit w={104} className="ml-[116px]">Grid Snap</Fit>
        <Fit w={61} className="ml-[40px]">Ortho</Fit>
        <Fit w={66} className="ml-[41px]">Planar</Fit>
        <div className="ml-[23px] h-[50px] w-[102px] rounded-[4px] bg-[#f9f9f9] pl-[16px] font-bold text-[#1c1c1c]"><Fit w={72}>Osnap</Fit></div>
      </div>
    </div>
  );
}

/* ---------- file browser behind ---------- */

function FinderWindow() {
  return (
    <div className="absolute left-[1640px] top-[16px] h-[1500px] w-[450px] overflow-hidden rounded-tr-[20px] bg-white shadow-[0_0_0_1px_rgba(80,110,140,.5)]">
      <div className="flex h-[105px] items-start justify-between border-b-2 border-[#d6d6d6] bg-[#e8e8e8] pl-[204px] pr-[27px] pt-[26px] text-[22px] text-[#adadad]">
        <div>
          <div className="flex h-[31px] items-center pl-[6px]">
            <svg width="27" height="27" viewBox="0 0 27 27" fill="#a8a8a8"><circle cx="13.500" cy="13.500" r="12" fill="none" stroke="#a8a8a8" strokeWidth="2" /><circle cx="8" cy="13.500" r="1.900" /><circle cx="13.500" cy="13.500" r="1.900" /><circle cx="19" cy="13.500" r="1.900" /></svg>
            <svg width="16" height="12" viewBox="0 0 16 12" className="ml-[13px]"><path d="M2 2.500L8 9L14 2.500" fill="none" stroke="#a0a0a0" strokeWidth="2.600" /></svg>
          </div>
          <Fit w={66} className="leading-[54px]">Action</Fit>
        </div>
        <div>
          <div className="flex h-[31px] items-center pl-[24px]">
            <svg width="28" height="28" viewBox="0 0 28 28" fill="none" stroke="#a6a6a6" strokeWidth="2"><circle cx="11" cy="11" r="9.500" /><path d="M18 18L26 26" strokeWidth="2.600" /></svg>
          </div>
          <Fit w={72} className="leading-[54px]">Search</Fit>
        </div>
      </div>
      <div className="flex flex-col items-start pl-[200px] pt-[168px] text-[22px] leading-[32px] text-[#262626]">
        <Fit w={33}>dm</Fit>
        <Fit w={27} className="mt-[220px]">d_</Fit>
        <Fit w={27}>rhl</Fit>
      </div>
    </div>
  );
}

/* ---------- node editor window ---------- */

function Hex({ children }) {
  return (
    <g>
      <path d="M-13 -21H13L24 0L13 21H-13L-24 0Z" fill="#111" />
      <path d="M-11.500 -18.500H11.500L21 0L11.500 18.500H-11.500L-21 0Z" fill="url(#hex)" stroke="#4a4a4a" strokeWidth="1" />
      {children}
    </g>
  );
}
function Tile({ fill = "url(#steel)", children }) {
  return (
    <g>
      <rect x="-23" y="-23" width="46" height="46" rx="4" fill={fill} stroke="#000" strokeWidth="2" />
      <rect x="-21" y="-21" width="42" height="42" rx="2" fill="none" stroke="#fff" strokeOpacity=".55" strokeWidth="1.500" />
      {children}
    </g>
  );
}
const glyph = { fontFamily: "Liberation Serif, serif", fontWeight: 700, fill: "#fff", textAnchor: "middle" };

const arrow = "M-20 -8H-4V-16L20 0L-4 16V8H-20Z";
const panels = [
  { name: "Geometry", cols: [
    [<Hex><path d="M-6 -7L6 7M6 -7L-6 7" stroke="#fff" strokeWidth="4.500" /></Hex>, <Hex><path d="M-9 10L4 -3" stroke="#eee" strokeWidth="5.500" /><path d="M11 -12L8 4L-4 -8Z" fill="#fff" /></Hex>],
    null,
    [<Hex><circle r="12" fill="none" stroke="#f4f4f4" strokeWidth="3.500" /></Hex>, <Hex><path d="M-10 -10Q6 -6 8 12M-12 -4L-9 -11L-2 -10M2 12H13" fill="none" stroke="#fff" strokeWidth="2.800" /></Hex>],
    [<Hex><g fill="none" stroke="#ccc" transform="rotate(-50)"><ellipse rx="17" ry="9.500" strokeWidth="2.600" /><ellipse cx="-1" cy="-1.500" rx="10" ry="5.500" strokeWidth="1.800" /><ellipse cx="-1" cy="-1.500" rx="4.500" ry="2" strokeWidth="1.400" /></g></Hex>, <Hex><path d="M-8 8L8 -8" stroke="#fff" strokeWidth="3.600" /><rect x="5.500" y="-10.500" width="6" height="6" fill="#111" stroke="#fff" strokeWidth="1.800" /><rect x="-11.500" y="6" width="6" height="6" fill="#111" stroke="#fff" strokeWidth="1.800" /></Hex>],
    [<Hex><path d="M-13 -5L9 -13L16 1L-10 12Z" fill="#6d6d6d" stroke="#fff" strokeWidth="2.800" /><path d="M-6 5L-4 -3L5 -5V3" fill="none" stroke="#999" strokeWidth="2" /></Hex>, <Hex><path d="M0 -11L12 0L0 11L-12 0Z" fill="none" stroke="#fff" strokeWidth="2.500" /><path d="M-14 -14L14 14M14 -14L-14 14" stroke="#999" strokeWidth="1.200" /></Hex>],
    null,
    [<Hex><path d="M-11 -8L0 -14L12 -9V7L3 13L-11 10Z" fill="#b9b9b9" stroke="#fff" strokeWidth="1.500" /><path d="M-11 -8L3 -4L12 -9L0 -14Z" fill="#f4f4f4" /><path d="M3 -4V13L12 7V-9Z" fill="#8e8e8e" /></Hex>, <Hex><path d="M-14 2L0 -13Q8 -15 12 -11Q17 -4 13 1L2 13Q-10 15 -14 2Z" fill="url(#lightMetal)" stroke="#eee" strokeWidth="1" /><ellipse cx="8" cy="-8" rx="4" ry="5" fill="#444" stroke="#eee" strokeWidth="1.500" transform="rotate(-40 8 -8)" /></Hex>],
    [<Hex><g stroke="#cfcfcf" strokeWidth="1.300" fill="none"><path d="M-12 -15V15M0 -17V17M12 -15V15M-14 -12H14M-19 0H19M-14 12H14M-12 -12L12 12M12 -12L-12 12M-12 0L0 12L12 0L0 -12Z" /></g></Hex>, <Hex><path d="M-6 -14Q4 -12 9 -14V14L-14 6Q-6 -2 -6 -14Z" fill="#a9a9a9" stroke="#fff" strokeWidth="2" /><path d="M2 -13V11M-10 0H9" stroke="#666" strokeWidth="1.500" /></Hex>],
  ] },
  { name: "Primitive", cols: [
    [<Hex><circle r="12" fill="#fff" /><path d="M7.500 -7.500A10.500 10.500 0 0 1 -7.500 7.500Z" fill="#222" /></Hex>, <Hex><text {...glyph} fontFamily="Liberation Sans, sans-serif" y="11.500" fontSize="32">7</text></Hex>],
    [<Hex><text x="-14.500" y="11" fontFamily="Liberation Serif, serif" fontWeight="700" fontSize="31" fill="#d4d4d4" textLength="29" lengthAdjust="spacingAndGlyphs">0.1</text></Hex>, <Hex><text {...glyph} y="11.500" fontSize="36">A</text></Hex>],
  ] },
  { name: "Input", cols: [
    [<Tile><path d="M-4 -11H4V0H8L0 9L-8 0H-4Z" /><path d="M-18 12H18" stroke="#000" strokeWidth="3" /><path d="M-16 16.500H18" stroke="#000" strokeWidth="5" strokeDasharray="2 3.500" /></Tile>, <Tile fill="url(#amber)"><path d="M-16 12L-11 7L-12 14L-5 2L-4 13Q0 4 -5 -12Q-2 -2 5 9Q8 4 5 -12Q8 0 13 6L18 1" fill="none" stroke="#9a5a12" strokeWidth="3.600" strokeLinejoin="round" strokeLinecap="round" /></Tile>],
    null,
    [<Tile><rect x="-10" y="-17" width="20" height="36" fill="#1a1a1a" /><rect x="-7" y="-15" width="14" height="15" fill="url(#lightMetal)" /></Tile>, <g><circle r="22.500" fill="#a8a8a8" stroke="#666" strokeWidth="2" /><circle r="17" fill="#8a8a8a" /><path d="M-15 0A15 15 0 0 1 8 -12L22 0L8 12A15 15 0 0 1 -15 0Z" fill="#222" stroke="#444" /></g>],
    [<Tile fill="url(#steelDark)"><path d="M-8 -15H8" stroke="#666" strokeWidth="4" /><path d="M-2 -21L-9 -15M4 -21L1 -9" stroke="#777" strokeWidth="4" /><path d="M10 -2H-2L-5 7Q5 5 3 14L0 21" fill="none" stroke="#222" strokeWidth="6" /></Tile>, <Tile fill="url(#steelDark)"><g fill="#e4e4e4" stroke="#222" strokeWidth="2.200"><rect x="-17" y="-15" width="34" height="8" /><rect x="-17" y="-3" width="34" height="8" /><rect x="-17" y="9" width="34" height="8" /></g></Tile>],
    null,
    [<Tile fill="url(#pink)"><rect x="-22" y="-22" width="44" height="22" fill="url(#greyFade)" /><path d="M-22 7H22" stroke="#222" strokeWidth="2.500" /><circle cx="9" cy="7" r="4" fill="#fff" stroke="#111" strokeWidth="2" /><path d="M-22 3A4 4 0 0 1 -22 11Z" fill="#fff" stroke="#111" strokeWidth="2" /></Tile>,
      <Tile fill="#a7e23c">{["#dff5b8", "#e2f9a0", "#b9d9a0", "#f0fbc8", "#4c9a22", "#9ade36", "#4c9a28", "#8fd430", "#7ee845", "#2c6a14", "#aaf04e", "#6fd07a", "#4fb632", "#163a08", "#6fc044", "#86ffc4"].map((c, i) => <rect key={i} x={-21 + (i % 4) * 10.5} y={-21 + Math.floor(i / 4) * 10.5} width="10.500" height="10.500" fill={c} />)}</Tile>],
  ] },
  { name: "Rhino", cols: [
    [<Hex><g transform="scale(.72)"><Cake /></g></Hex>, <Hex><path d="M0 0Q4 -3 5 2Q3 8 -4 6Q-9 1 -6 -5Q1 -12 9 -6Q14 3 8 10Q-3 16 -11 9Q-17 -2 -9 -11Q3 -19 13 -9" fill="none" stroke="#c9792a" strokeWidth="2.600" /></Hex>],
    null,
    [<Hex><path d="M-18 -8L-8 -18M-20 4L2 -18M-16 14L12 -14M-8 18L18 -8M4 18L20 4M18 -8L8 -18M20 4L-2 -18M16 14L-12 -14M8 18L-18 -8M-4 18L-20 4" stroke="#d98f24" strokeWidth="2" /></Hex>, <Hex><path d="M-12 -13H12" stroke="#e6e6e6" strokeWidth="3.500" /><path d="M-18 -4H18" stroke="#ddd" strokeWidth="2.500" strokeDasharray="8 2 2 2" /><path d="M-19 4H19" stroke="#e5b52d" strokeWidth="2.500" strokeDasharray="6 2.500" /><path d="M-14 12H14" stroke="#ddd" strokeWidth="2.500" strokeDasharray="3 4" /></Hex>],
  ] },
  { name: "Util", cols: [
    [<g><path d="M-9 4Q-8 -8 6 -17M11 8Q11 -6 4 -17" fill="none" stroke="#5a2320" strokeWidth="2.600" /><path d="M-14 -5Q-14 -20 6 -19Q2 -6 -14 -5Z" fill="#4fae2c" stroke="#2b6f16" /><circle cx="-11" cy="9" r="9.500" fill="url(#cherry)" /><circle cx="10" cy="14" r="9.500" fill="url(#cherry)" /></g>, <Tile fill="url(#steel)"><path d="M-22 17H22V22H-22Z" /><path d="M-3 18Q-2 8 -2 4L2 4Q2 10 4 18Z" /><g fill="none" stroke="#111" strokeWidth="2"><path d="M0 6L-8 -4L-16 -6M0 6L8 -5L17 -7M-1 4L-4 -12M1 4L4 -14M-8 -4L-10 -14M8 -5L11 -15M-16 2L-6 -2M16 3L7 -2" /></g><path d="M-18 -6L18 -8M-16 -12L16 -13M-17 -1L-8 -3M17 -1L9 -3M-11 -17L11 -17" stroke="#222" strokeWidth="4" strokeDasharray="2 3" opacity=".8" /></Tile>],
    null,
    [<path d={arrow} fill="url(#darkArrow)" stroke="#222" strokeWidth="1.800" transform="translate(0 1)" />, <path d={arrow} fill="#eee" stroke="#777" strokeWidth="1.800" transform="translate(0 1)" />],
    null,
    [<g><ellipse cx="-6" cy="-5" rx="11" ry="17" transform="rotate(30 -6 -5)" fill="url(#lightMetal)" stroke="#8a8a8a" strokeWidth="1.500" /><ellipse cx="-7" cy="-1" rx="3" ry="5" fill="#444" /><ellipse cx="7" cy="8" rx="11" ry="15" transform="rotate(30 7 8)" fill="#e2558c" stroke="#9a1f52" strokeWidth="1.800" /><circle cx="3" cy="8" r="4" fill="#5a0f2c" /></g>, <g transform="translate(-2 0)"><path d="M-4.500 -17H4.500M-3.500 -17V-5L-14 16Q-14 20 -9 20H9Q14 20 14 16L3.500 -5V-17" fill="#f1e6ec" stroke="#8c2a5a" strokeWidth="2" /><path d="M-7 2H7L13 16Q13 19 9 19H-9Q-13 19 -13 16Z" fill="#d23a7c" /><path d="M-7 2H7L9 8H-9Z" fill="#f08c9c" /></g>],
  ] },
];

const widths = [385, 121, 273, 141, 218];

function Panel({ p, w }) {
  return (
    <div className="flex h-[146px] shrink-0 flex-col overflow-hidden rounded-[8px] border-2 border-[#8e8e8e] bg-gradient-to-b from-[#dadada] to-[#e9e9e9]" style={{ width: w }}>
      <div className="flex h-[117px] px-[2px] pt-[3px]">
        {p.cols.map((c, i) => c === null ? (
          <div key={i} className="flex w-[20px] shrink-0 justify-center pb-[8px] pt-[6px]"><div className="w-[3px] border-r-2 border-[#f4f4f4] bg-[#c2c2c2]" /></div>
        ) : (
          <div key={i} className="w-[56px] shrink-0">
            {c.map((icon, j) => <svg key={j} width="56" height="56" viewBox="-28 -28 56 56" className="block">{icon}</svg>)}
          </div>
        ))}
      </div>
      <div className="-mx-[2px] -mb-[2px] flex flex-1 items-center bg-gradient-to-b from-[#3b3b3b] to-[#1f1f1f] text-[#e8e8e8]">
        <div className="flex-1 pb-[2px] text-center text-[19.800px] [font-family:Liberation_Sans,Arial,sans-serif]">{p.name}</div>
        <svg width="21" height="18" viewBox="-8 -9 21 18"><path d="M0 -8V0" stroke="#8c8c8c" strokeWidth="3.600" /><path d="M-7 0H7L0 8Z" fill="#8c8c8c" /></svg>
      </div>
    </div>
  );
}

const ghTabs = [
  ["Maths", 61, 27], ["Sets", 45, 27], ["Vector", 64, 25], ["Curve", 61, 25], ["Surface", 79, 26], ["Mesh", 56, 25], ["Intersect", 89, 25],
  ["Transform", 103, 25], ["Display", 76, 25], ["Rhino", 60, 25], ["Kangaroo2", 112, 26], ["Panelling Tools", 150, 0],
];

function Btn({ w, children }) {
  return <div className="flex h-[40px] shrink-0 items-center justify-center rounded-[9px] bg-white shadow-[0_1px_2px_rgba(0,0,0,.35)]" style={{ width: w }}>{children}</div>;
}

function NodeCanvas() {
  return (
    <div className="relative h-[342px] w-full overflow-hidden bg-[#dbd8d0] text-black">
      <svg width="1256" height="342" viewBox="834 1052 1256 342" className="absolute left-0 top-0">
        {[1081.5, 1425.3, 1769].map((x) => <path key={x} d={`M${x} 1052V1394`} stroke="#bfbcb5" strokeWidth="1.800" />)}
        {[1125.7, 1240, 1354.500].map((y) => <path key={y} d={`M836 ${y}H2090`} stroke="#bfbcb5" strokeWidth="2" />)}
        <circle cx="1191" cy="1047" r="9" fill="#000" />
        <circle cx="1188" cy="1281" r="11" fill="#fff" stroke="#000" strokeWidth="3.600" />
      </svg>
      <div className="absolute -top-[20px] left-[354px] h-[88px] w-[1100px] rounded-[7px] border-2 border-[#2c3a3a] bg-[#adfbf9] pl-[194px] pt-[18px]">
        <Fit w={780} className="text-[18.300px] font-bold leading-[26px] [font-family:Liberation_Mono,Courier_New,monospace]">To see the phone in the stand, enable the phone view in the phone group</Fit>
      </div>
      <div className="absolute left-[352px] top-[155px] h-[148px] w-[1208px] overflow-hidden rounded-[7px] border-2 border-[#2c3434] bg-[#adfbf9]">
        <div className="flex h-[37px] items-center justify-center border-b-[3px] border-[#0c1c1c] bg-[#8bc9c7] pr-[2px] pt-[6px] text-[22px] shadow-[inset_0_2px_1px_#a9e0de] [font-family:Inter,sans-serif]"><Fit w={60}>notes</Fit></div>
        <div className="h-[22px] bg-gradient-to-b from-[#8cc6c4] to-[#adfbf9]" />
        <div className="-ml-[1px] mt-[20px] whitespace-pre text-[18.310px] font-bold leading-[26px] [font-family:Liberation_Mono,Courier_New,monospace]">Inspect the solution. If it seems viable, bake it to the layer of your choosing (default is the current layer).</div>
      </div>
    </div>
  );
}

function GrasshopperWindow() {
  return (
    <div className="absolute left-[834px] top-[714px] flex h-[680px] w-[1256px] flex-col overflow-hidden rounded-tl-[18px] bg-[#ebeded] [font-family:Liberation_Sans,Arial,sans-serif]">
      <div className="flex h-[56px] shrink-0 items-center border-b border-[#bfbfbf] bg-[#e6e8e7] pl-[16px] shadow-[inset_0_1px_0_#fff]">
        <div className="flex shrink-0 gap-[16px]">
          {[0, 1, 2].map((i) => <div key={i} className="h-[24px] w-[24px] rounded-full border border-[#b2b2b2] bg-[#cfcfcf]" />)}
        </div>
        <div className="ml-[520px] flex shrink-0 whitespace-nowrap pb-[2px] text-[24.500px] font-bold text-[#a9aaaa] [font-family:Inter,sans-serif]">
          <Fit w={554}>Grasshopper - CellPhoneStand_wContext_</Fit><Fit w={66}>2024</Fit>
        </div>
      </div>
      <div className="relative flex h-[44px] shrink-0 bg-[#ececec] text-[22.500px] text-[#6f6f6f]">
        <svg width="1256" height="46" viewBox="0 0 1256 46" className="absolute left-0 top-0"><path d="M1 48V10Q1 1 10 1H95Q104 1 104.500 11V30Q106 43 119 43H1260V48Z" fill="url(#tab)" stroke="#9c9c9c" strokeWidth="2" /></svg>
        <div className="relative w-[104px] shrink-0 pl-[12px] leading-[40px] text-[#1e1e1e]"><Fit w={79}>Params</Fit></div>
        <div className="relative flex pl-[13px] leading-[49px]">
          {ghTabs.map(([t, w, g]) => <div key={t} className="flex"><Fit w={w}>{t}</Fit><div style={{ width: g }} /></div>)}
        </div>
      </div>
      <div className="h-[178px] shrink-0 border-b-2 border-[#d5d4d4] bg-gradient-to-b from-[#d9d9d9] via-[#e6e6e6] to-[#ececec] pl-[6px] pt-[4px]">
        <div className="flex gap-[7px]">
          {panels.map((p, i) => <Panel key={p.name} p={p} w={widths[i]} />)}
        </div>
      </div>
      <div className="flex h-[60px] shrink-0 items-center pl-[2px] pt-[1px]">
        <Btn w={52}><svg width="30" height="32" viewBox="0 0 30 32"><path d="M5 3L14 1L24 4V14H4Z" fill="#eee" stroke="#999" strokeWidth="1.500" /><path d="M2 14L12 13L14 10H26L27 29Q15 32 2 29Z" fill="#7cc254" stroke="#4c8a2c" strokeWidth="1.500" /></svg></Btn>
        <div className="ml-[4px]"><Btn w={52}><svg width="30" height="30" viewBox="0 0 30 30"><path d="M1 1H29V29H4L1 26Z" fill="#3c6fd8" stroke="#1f3f96" strokeWidth="2" /><rect x="6" y="2" width="18" height="13" fill="#e6edf8" /><path d="M6 6H24M6 10H24" stroke="#b9c6dd" strokeWidth="1.500" /><rect x="8" y="19" width="15" height="10" fill="#d5dae4" /><rect x="10" y="21" width="5" height="7" fill="#1f3f96" /></svg></Btn></div>
        <div className="ml-[8px] h-[32px] w-[2px] bg-[#d4d4d4]" />
        <div className="ml-[8px]">
          <Btn w={148}>
            <Fit w={63} className="ml-[18px] text-[24px] text-[#262626] [font-family:Inter,sans-serif]">114%</Fit>
            <div className="ml-[28px] flex h-[34px] w-[32px] shrink-0 items-center justify-center rounded-[8px] bg-white shadow-[0_0_2px_rgba(0,0,0,.4)]"><svg width="16" height="12"><path d="M2 2.500L8 9L14 2.500" fill="none" stroke="#222" strokeWidth="2.800" /></svg></div>
          </Btn>
        </div>
        <div className="ml-[4px]"><Btn w={64}><svg width="30" height="30" viewBox="0 0 30 30"><path d="M2 12V2H12M18 2H28V12M28 18V28H18M12 28H2V18" fill="none" stroke="#111" strokeWidth="4" /><path d="M10 10L20 20M20 10L10 20" stroke="#888" strokeWidth="2" /><rect x="12" y="12" width="6" height="6" /></svg></Btn></div>
        <div className="ml-[22px]"><Btn w={64}><svg width="29" height="20" viewBox="0 0 32 22"><path d="M2 12Q15 -5 30 12Q16 25 2 12Z" fill="#d5ecf8" stroke="#444" strokeWidth="2" /><circle cx="16" cy="10.500" r="7.500" fill="#4a9fd6" stroke="#1d4f78" strokeWidth="1.500" /><circle cx="16" cy="10.500" r="3.500" fill="#071827" /></svg></Btn></div>
        <div className="ml-[20px]"><Btn w={52}><svg width="30" height="28" viewBox="0 0 30 28"><path d="M2 14Q6 16 4 22Q8 28 14 25" fill="none" stroke="#6d2a12" strokeWidth="2.500" /><path d="M12 13Q20 4 28 2L25 14L18 22Z" fill="#ef5545" /><path d="M12 13L18 22Q13 26 8 24Q9 18 12 13Z" fill="#7a4a32" /></svg></Btn></div>
      </div>
      <NodeCanvas />
    </div>
  );
}

export default function App() {
  return (
    <div className="relative h-[1394px] w-[2090px] overflow-hidden bg-[#84b9e9] [font-family:Inter,sans-serif]">
      <Defs />
      <FinderWindow />
      <RhinoWindow />
      <div className="absolute left-[834px] top-[714px] h-[800px] w-[1400px] rounded-tl-[18px] shadow-[0_0_0_1px_rgba(0,0,0,.35),0_12px_40px_rgba(0,0,0,.4)]" />
      <GrasshopperWindow />
      <div className="pointer-events-none absolute bottom-0 left-0 h-[80px] w-full bg-gradient-to-b from-transparent to-black/10" />
    </div>
  );
}
